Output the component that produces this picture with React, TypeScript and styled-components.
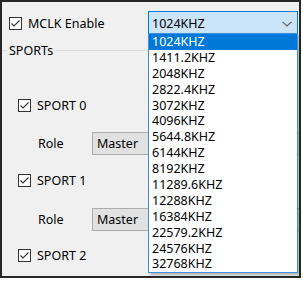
import styled, {createGlobalStyle} from 'styled-components';

const GlobalStyle = createGlobalStyle`
  html, body {
    margin: 0;
    padding: 0;
    background: #ffffff;
  }
  body {
    font-family: "Segoe UI", "Noto Sans", "Liberation Sans", sans-serif;
    font-size: 12.5px;
    color: #000000;
  }
`;

const FREQUENCIES = [
  '1024KHZ',
  '1411.2KHZ',
  '2048KHZ',
  '2822.4KHZ',
  '3072KHZ',
  '4096KHZ',
  '5644.8KHZ',
  '6144KHZ',
  '8192KHZ',
  '11289.6KHZ',
  '12288KHZ',
  '16384KHZ',
  '22579.2KHZ',
  '24576KHZ',
  '32768KHZ',
];

const Frame = styled.div`
  position: relative;
  box-sizing: border-box;
  width: 301px;
  height: 278px;
  border: 2px solid #262626;
  background: #f0f0f0;
  padding-top: 9px;
  overflow: hidden;
  display: flex;
  flex-direction: column;
`;

const TopRow = styled.div`
  display: grid;
  grid-template-columns: 146px 150px;
  align-items: center;
  height: 24px;
`;

const CheckRow = styled.label<{$indent: number; $top?: number}>`
  display: flex;
  align-items: center;
  gap: 6px;
  height: 13px;
  margin-left: ${p => p.$indent}px;
  margin-top: ${p => p.$top ?? 0}px;
  line-height: 13px;
  white-space: nowrap;
`;

const Box = styled.span`
  box-sizing: border-box;
  width: 13px;
  height: 13px;
  border: 1px solid #333333;
  background: #ffffff;
  display: flex;
  align-items: center;
  justify-content: center;
  flex: none;
`;

const Combo = styled.div`
  position: relative;
  box-sizing: border-box;
  height: 24px;
  border: 1px solid #0078d7;
  background: #cce4f7;
  display: flex;
  align-items: center;
  justify-content: space-between;
  padding: 1px 5px 0 3px;
`;

const DropList = styled.ul`
  position: absolute;
  top: calc(100% - 1px);
  left: -1px;
  right: -1px;
  margin: 0;
  padding: 0;
  list-style: none;
  box-sizing: border-box;
  border: 1px solid #3d8fe0;
  background: #ffffff;
  box-shadow: 2px 2px 3px rgba(0, 0, 0, 0.28);
  z-index: 2;
`;

const DropItem = styled.li<{$selected?: boolean}>`
  height: 15.9px;
  line-height: 16.5px;
  padding-left: 3px;
  background: ${p => (p.$selected ? '#0078d7' : '#ffffff')};
  color: ${p => (p.$selected ? '#ffffff' : '#000000')};
  white-space: nowrap;
`;

const GroupHeader = styled.div`
  display: flex;
  align-items: center;
  height: 13px;
  margin-top: 9px;
`;

const GroupLine = styled.span<{$width?: number}>`
  display: block;
  height: 0;
  border-top: 1px solid #dcdcdc;
  flex: ${p => (p.$width ? `0 0 ${p.$width}px` : '1')};
`;

const GroupLabel = styled.span`
  padding: 0 2px;
  line-height: 13px;
`;

const RoleRow = styled.div<{$top: number}>`
  display: flex;
  align-items: center;
  margin-top: ${p => p.$top}px;
  height: 23px;
`;

const RoleLabel = styled.span`
  flex: none;
  width: 54px;
  margin-left: 36px;
`;

const Select = styled.div`
  flex: none;
  box-sizing: border-box;
  height: 23px;
  width: 220px;
  border: 1px solid #adadad;
  background: #e1e1e1;
  padding-left: 4px;
  display: flex;
  align-items: center;
`;

const Check = () => (
  <Box>
    <svg width="11" height="11" viewBox="0 0 11 11">
      <polyline
        points="1.5,5.5 4,8 9.5,2.5"
        fill="none"
        stroke="#333333"
        strokeWidth="1.1"
      />
    </svg>
  </Box>
);

const Chevron = () => (
  <svg width="10" height="6" viewBox="0 0 10 6">
    <polyline
      points="0.5,0.8 5,5 9.5,0.8"
      fill="none"
      stroke="#606060"
      strokeWidth="1.1"
    />
  </svg>
);

const App = () => {
  return (
    <>
      <GlobalStyle />
      <Frame>
        <TopRow>
          <CheckRow $indent={7}>
            <Check />
            MCLK Enable
          </CheckRow>
          <Combo>
            <span>1024KHZ</span>
            <Chevron />
            <DropList>
              {FREQUENCIES.map((f, i) => (
                <DropItem key={f} $selected={i === 0}>
                  {f}
                </DropItem>
              ))}
            </DropList>
          </Combo>
        </TopRow>
        <GroupHeader>
          <GroupLine $width={5} />
          <GroupLabel>SPORTs</GroupLabel>
          <GroupLine />
        </GroupHeader>
        <CheckRow $indent={16} $top={42}>
          <Check />
          SPORT 0
        </CheckRow>
        <RoleRow $top={20}>
          <RoleLabel>Role</RoleLabel>
          <Select>Master</Select>
        </RoleRow>
        <CheckRow $indent={16} $top={19}>
          <Check />
          SPORT 1
        </CheckRow>
        <RoleRow $top={21}>
          <RoleLabel>Role</RoleLabel>
          <Select>Master</Select>
        </RoleRow>
        <CheckRow $indent={16} $top={18}>
          <Check />
          SPORT 2
        </CheckRow>
      </Frame>
    </>
  );
};

export default App;
